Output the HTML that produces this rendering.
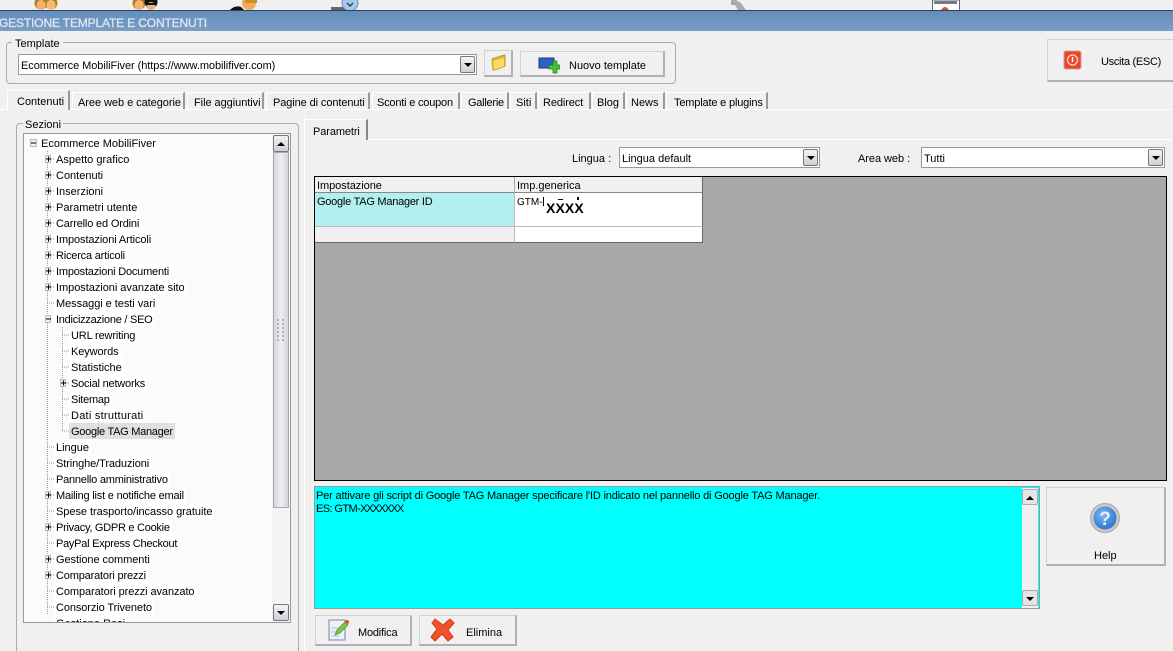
<!DOCTYPE html>
<html><head><meta charset="utf-8">
<style>
html,body{margin:0;padding:0;width:1173px;height:651px;overflow:hidden;background:#f0f0f0}
body{position:relative;font:11px/13px "Liberation Sans",sans-serif;color:#000}
.a{position:absolute;box-sizing:border-box}
.t{position:absolute;white-space:nowrap;line-height:13px}
.tab{position:absolute;top:92px;height:17px;border-top:1px solid #fff;border-right:2px solid #999;border-left:1px solid #fff;box-sizing:border-box}
.btn{position:absolute;box-sizing:border-box;background:#f0f0f0;border:1px solid #d0d0d0;border-right:2px solid #b0b0b0;border-bottom:2px solid #b0b0b0}
.combo{position:absolute;box-sizing:border-box;background:#fff;border:1px solid #999;height:21px}
.arr{position:absolute;box-sizing:border-box;width:15px;height:17px;background:linear-gradient(#f4f4f6,#cfd0d6);border:1px solid #777;border-radius:2px}
.arr:after{content:"";position:absolute;left:3px;top:6px;border-left:4px solid transparent;border-right:4px solid transparent;border-top:4px solid #000}
.up:after{border-top:0;border-bottom:4px solid #000}
.n{position:absolute;white-space:nowrap;height:16px;line-height:19px;background:#fff;padding:0 2px}
</style></head><body>

<!-- top icons -->
<svg class="a" style="left:0;top:0" width="1173" height="11">
<g><circle cx="41" cy="3" r="6.500" fill="#b07a20"/><circle cx="51" cy="3" r="6.500" fill="#b8841f"/><ellipse cx="41" cy="5" rx="4.500" ry="5" fill="#f6b070"/><ellipse cx="51" cy="5" rx="4.500" ry="5" fill="#f8b878"/></g>
<g><circle cx="139" cy="3" r="6.500" fill="#b07a20"/><ellipse cx="139" cy="5" rx="4.500" ry="5" fill="#f6b070"/><circle cx="151" cy="2" r="6.500" fill="#111"/><ellipse cx="151" cy="6" rx="4.500" ry="4" fill="#e8b080"/><path d="M146 3h11v2h-11z" fill="#111"/></g>
<g><path d="M230 10q5-5 11-3l3 3z" fill="#111"/><ellipse cx="249" cy="3" rx="7" ry="7" fill="#f4aa58"/><path d="M245 0h12v3h-12z" fill="#c8941f"/></g>
<g><path d="M331 7h14v3h-14z" fill="#667"/><circle cx="350" cy="3" r="8" fill="#a9c9ea" stroke="#6a8ab0"/><path d="M347 3l3 3 3-3" fill="none" stroke="#345" stroke-width="1.500"/></g>
<path d="M731 0h5l3 2 2 1 5 7h-8l-3-5h-4z" fill="#aaa"/>
<g><rect x="932.500" y="0" width="27" height="11" fill="#fff" stroke="#667"/><path d="M934 1h23v3h-23z" fill="#778"/><path d="M941 10q4-6 8 0z" fill="#e0502a"/></g>
</svg>

<!-- title bar -->
<div class="a" style="left:0;top:10px;width:1173px;height:1px;background:#2f4058"></div>
<div class="a" style="left:0;top:11px;width:1173px;height:20px;background:linear-gradient(#638ebb,#7b9dc4)"></div>
<div class="t" style="left:-1px;top:17px;font-size:12px;color:#dfe7f1;letter-spacing:-.15px;-webkit-text-stroke:.3px #dfe7f1">GESTIONE TEMPLATE E CONTENUTI</div>

<!-- template group -->
<div class="a" style="left:6px;top:42px;width:670px;height:42px;border:1px solid #aaa;border-radius:4px"></div>
<div class="t" style="left:12px;top:38px;background:#f0f0f0;padding:0 3px">Template</div>
<div class="combo" style="left:18px;top:54px;width:459px"><span class="t" style="left:2px;top:5px;letter-spacing:-.06px">Ecommerce MobiliFiver (https://www.mobilifiver.com)</span><div class="arr" style="left:441px;top:1px"></div></div>
<div class="btn" style="left:484px;top:50px;width:29px;height:27px">
<svg class="a" style="left:5px;top:3px" width="18" height="18"><path d="M2 5l9-3 4-1v11l-10 4H3z" fill="#e0b830" stroke="#b89a30"/><path d="M3 7l11-3v8l-10 4z" fill="#fbdc60"/></svg></div>
<div class="btn" style="left:520px;top:51px;width:145px;height:26px">
<svg class="a" style="left:17px;top:5px" width="22" height="18"><rect x="1" y="1" width="15" height="10" fill="#2a62c8" stroke="#1a3a80"/><path d="M11 8h4V4h4v4h3v4h-3v4h-4v-4h-4z" fill="#48c038" stroke="#1c8018" stroke-width=".7"/></svg>
<span class="t" style="left:48px;top:8px">Nuovo template</span></div>
<div class="btn" style="left:1047px;top:39px;width:130px;height:43px;border-right:0">
<svg class="a" style="left:15px;top:10px" width="20" height="20"><rect x="1" y="1" width="17" height="18" rx="2" fill="#e8452a" stroke="#d8a090"/><circle cx="9.500" cy="10" r="5" fill="none" stroke="#f8c8b8" stroke-width="1.500"/><path d="M9.500 7v5" stroke="#fff" stroke-width="1.500"/></svg>
<span class="t" style="left:53px;top:16px;letter-spacing:-.3px">Uscita (ESC)</span></div>

<!-- tabs -->
<div class="a" style="left:0;top:109px;width:1173px;height:1px;background:#fff"></div>
<div class="tab" style="left:7px;top:90px;width:63px;height:20px;background:#f0f0f0"><span class="t" style="left:9px;top:5px">Contenuti</span></div>
<div class="tab" style="left:72px;width:113px"><span class="t" style="left:5px;top:4px;letter-spacing:-.05px">Aree web e categorie</span></div>
<div class="tab" style="left:187px;width:77px"><span class="t" style="left:6px;top:4px;letter-spacing:-.05px">File aggiuntivi</span></div>
<div class="tab" style="left:266px;width:104px"><span class="t" style="left:6px;top:4px;letter-spacing:-.1px">Pagine di contenuti</span></div>
<div class="tab" style="left:372px;width:88px"><span class="t" style="left:4px;top:4px;letter-spacing:-.2px">Sconti e coupon</span></div>
<div class="tab" style="left:461px;width:48px"><span class="t" style="left:6px;top:4px;letter-spacing:-.25px">Gallerie</span></div>
<div class="tab" style="left:510px;width:27px"><span class="t" style="left:5px;top:4px">Siti</span></div>
<div class="tab" style="left:538px;width:53px"><span class="t" style="left:4px;top:4px;letter-spacing:-.1px">Redirect</span></div>
<div class="tab" style="left:592px;width:33px"><span class="t" style="left:4px;top:4px">Blog</span></div>
<div class="tab" style="left:626px;width:39px"><span class="t" style="left:4px;top:4px">News</span></div>
<div class="tab" style="left:666px;width:102px"><span class="t" style="left:7px;top:4px;letter-spacing:-.17px">Template e plugins</span></div>

<!-- Sezioni -->
<div class="a" style="left:16px;top:123px;width:283px;height:540px;border:1px solid #aaa;border-radius:4px"></div>
<div class="t" style="left:23px;top:119px;background:#f0f0f0;padding:0 2px">Sezioni</div>
<div class="a" style="left:23px;top:133px;width:268px;height:490px;border:1px solid #999;background:#fbfbfb;overflow:hidden">
<svg class="a" style="left:0;top:0" width="60" height="488">
<path d="M23.500 17V480M38.500 193V297" stroke="#999" stroke-dasharray="1 1" fill="none"/>
<path d="M23 25h8M23 41h8M23 57h8M23 73h8M23 89h8M23 105h8M23 121h8M23 137h8M23 153h8M23 169h8M23 313h8M23 329h8M23 345h8M23 361h8M23 377h8M23 393h8M23 409h8M23 425h8M23 441h8M23 457h8M23 473h8M38 201h8M38 217h8M38 233h8M38 249h8M38 265h8M38 281h8M38 297h8" stroke="#999" stroke-dasharray="1 1" fill="none"/>
<g fill="#f0f0f0" stroke="#bbb"><rect x="6.500" y="5.500" width="6" height="7"/><rect x="21.500" y="21.500" width="5" height="7"/><rect x="21.500" y="37.500" width="5" height="7"/><rect x="21.500" y="53.500" width="5" height="7"/><rect x="21.500" y="69.500" width="5" height="7"/><rect x="21.500" y="85.500" width="5" height="7"/><rect x="21.500" y="101.500" width="5" height="7"/><rect x="21.500" y="117.500" width="5" height="7"/><rect x="21.500" y="133.500" width="5" height="7"/><rect x="21.500" y="149.500" width="5" height="7"/><rect x="21.500" y="181.500" width="5" height="7"/><rect x="36.500" y="245.500" width="5" height="7"/><rect x="21.500" y="357.500" width="5" height="7"/><rect x="21.500" y="389.500" width="5" height="7"/><rect x="21.500" y="421.500" width="5" height="7"/><rect x="21.500" y="437.500" width="5" height="7"/></g>
<path d="M7 9h5M22 25h5M24.500 22.500v5M22 41h5M24.500 38.500v5M22 57h5M24.500 54.500v5M22 73h5M24.500 70.500v5M22 89h5M24.500 86.500v5M22 105h5M24.500 102.500v5M22 121h5M24.500 118.500v5M22 137h5M24.500 134.500v5M22 153h5M24.500 150.500v5M22 185h5M37 249h5M39.500 246.500v5M22 361h5M24.500 358.500v5M22 393h5M24.500 390.500v5M22 425h5M24.500 422.500v5M22 441h5M24.500 438.500v5" stroke="#000" fill="none"/>
</svg>
<div class="n" style="left:15px;top:1px">Ecommerce MobiliFiver</div>
<div class="n" style="left:30px;top:17px">Aspetto grafico</div>
<div class="n" style="left:30px;top:33px">Contenuti</div>
<div class="n" style="left:30px;top:49px">Inserzioni</div>
<div class="n" style="left:30px;top:65px">Parametri utente</div>
<div class="n" style="left:30px;top:81px;letter-spacing:-.17px">Carrello ed Ordini</div>
<div class="n" style="left:30px;top:97px;letter-spacing:-.1px">Impostazioni Articoli</div>
<div class="n" style="left:30px;top:113px;letter-spacing:-.2px">Ricerca articoli</div>
<div class="n" style="left:30px;top:129px;letter-spacing:-.2px">Impostazioni Documenti</div>
<div class="n" style="left:30px;top:145px;letter-spacing:-.04px">Impostazioni avanzate sito</div>
<div class="n" style="left:30px;top:161px;letter-spacing:-.05px">Messaggi e testi vari</div>
<div class="n" style="left:30px;top:177px;letter-spacing:-.25px">Indicizzazione / SEO</div>
<div class="n" style="left:45px;top:193px;letter-spacing:-.15px">URL rewriting</div>
<div class="n" style="left:45px;top:209px;letter-spacing:-.1px">Keywords</div>
<div class="n" style="left:45px;top:225px">Statistiche</div>
<div class="n" style="left:45px;top:241px;letter-spacing:-.2px">Social networks</div>
<div class="n" style="left:45px;top:257px;letter-spacing:-.25px">Sitemap</div>
<div class="n" style="left:45px;top:273px;letter-spacing:.25px">Dati strutturati</div>
<div class="n" style="left:45px;top:289px;background:#e0e0e0;letter-spacing:-.27px">Google TAG Manager</div>
<div class="n" style="left:30px;top:305px">Lingue</div>
<div class="n" style="left:30px;top:321px;letter-spacing:-.1px">Stringhe/Traduzioni</div>
<div class="n" style="left:30px;top:337px;letter-spacing:-.22px">Pannello amministrativo</div>
<div class="n" style="left:30px;top:353px;letter-spacing:-.2px">Mailing list e notifiche email</div>
<div class="n" style="left:30px;top:369px;letter-spacing:-.04px">Spese trasporto/incasso gratuite</div>
<div class="n" style="left:30px;top:385px;letter-spacing:-.27px">Privacy, GDPR e Cookie</div>
<div class="n" style="left:30px;top:401px;letter-spacing:-.26px">PayPal Express Checkout</div>
<div class="n" style="left:30px;top:417px;letter-spacing:-.06px">Gestione commenti</div>
<div class="n" style="left:30px;top:433px;letter-spacing:-.17px">Comparatori prezzi</div>
<div class="n" style="left:30px;top:449px;letter-spacing:-.08px">Comparatori prezzi avanzato</div>
<div class="n" style="left:30px;top:465px;letter-spacing:-.1px">Consorzio Triveneto</div>
<div class="n" style="left:30px;top:481px">Gestione Resi</div>
<!-- scrollbar -->
<div class="a" style="left:248px;top:0;width:18px;height:488px;background:#f4f4f4"></div>
<div class="arr up" style="left:249px;top:1px;width:16px;height:17px"></div>
<div class="a" style="left:249px;top:18px;width:16px;height:356px;background:linear-gradient(90deg,#d4d5dc,#eeeef2 50%,#d4d5dc);border:1px solid #aaa"></div>
<svg class="a" style="left:252px;top:185px" width="10" height="24"><path d="M1 0h2v2H1zM6 0h2v2H6zM1 4h2v2H1zM6 4h2v2H6zM1 8h2v2H1zM6 8h2v2H6zM1 12h2v2H1zM6 12h2v2H6zM1 16h2v2H1zM6 16h2v2H6zM1 20h2v2H1zM6 20h2v2H6z" fill="#b0b0b8"/></svg>
<div class="arr" style="left:249px;top:470px;width:16px;height:17px"></div>
</div>

<!-- right panel -->
<div class="a" style="left:304px;top:116px;width:1px;height:540px;background:#fff"></div>
<div class="a" style="left:304px;top:139px;width:869px;height:1px;background:#fff"></div>
<div class="a" style="left:305px;top:119px;width:63px;height:21px;background:#f0f0f0;border-top:1px solid #fff;border-right:2px solid #888"><span class="t" style="left:8px;top:6px;letter-spacing:-.1px">Parametri</span></div>

<div class="t" style="left:572px;top:153px">Lingua :</div>
<div class="combo" style="left:619px;top:147px;width:201px"><span class="t" style="left:2px;top:5px">Lingua default</span><div class="arr" style="left:183px;top:1px"></div></div>
<div class="t" style="left:858px;top:153px;letter-spacing:-.05px">Area web :</div>
<div class="combo" style="left:921px;top:147px;width:244px"><span class="t" style="left:2px;top:5px">Tutti</span><div class="arr" style="left:226px;top:1px"></div></div>

<!-- grid -->
<div class="a" style="left:314px;top:176px;width:853px;height:305px;background:#a9a9a9;border:1px solid #000"></div>
<div class="a" style="left:315px;top:177px;width:200px;height:16px;background:#f0f0f0;border-right:1px solid #aaa;border-bottom:1px solid #888"><span class="t" style="left:2px;top:2px;letter-spacing:-.05px;margin-top:1px">Impostazione</span></div>
<div class="a" style="left:515px;top:177px;width:188px;height:16px;background:#f0f0f0;border-right:1px solid #666;border-bottom:1px solid #888"><span class="t" style="left:2px;top:3px">Imp.generica</span></div>
<div class="a" style="left:315px;top:193px;width:200px;height:34px;background:#b2eff0;border-bottom:1px solid #bbb;border-right:1px solid #bbb"><span class="t" style="left:2px;top:3px;letter-spacing:-.25px">Google TAG Manager ID</span></div>
<div class="a" style="left:515px;top:193px;width:188px;height:34px;background:#fff;border-bottom:1px solid #bbb;border-right:1px solid #666"><span class="t" style="left:2px;top:3px;font-size:10px">GTM-</span><span class="t" style="left:28px;top:4px;font-size:1px;width:1px;height:9px;background:#000"></span><span class="t" style="left:31px;top:9px;font-size:14px;font-weight:bold;letter-spacing:.1px">XXXX</span><span class="a" style="left:43px;top:6px;width:5px;height:1px;background:#000"></span><span class="a" style="left:62px;top:4px;width:2px;height:3px;background:#000"></span></div>
<div class="a" style="left:315px;top:227px;width:200px;height:16px;background:#f0f0f0;border-bottom:1px solid #666;border-right:1px solid #bbb"></div>
<div class="a" style="left:515px;top:227px;width:188px;height:16px;background:#fff;border-bottom:1px solid #666;border-right:1px solid #666"></div>

<!-- help text -->
<div class="a" style="left:314px;top:486px;width:726px;height:123px;background:#00ffff;border:1px solid #999">
<span class="t" style="left:1px;top:3px;letter-spacing:-.17px">Per attivare gli script di Google TAG Manager specificare l'ID indicato nel pannello di Google TAG Manager.</span>
<span class="t" style="left:1px;top:16px;letter-spacing:-.6px">ES: GTM-<span style="letter-spacing:-1.2px">XXXXXXX</span></span>
<div class="a" style="left:707px;top:1px;width:16px;height:120px;background:#f0f0f0"></div>
<div class="arr up" style="left:707px;top:2px;width:16px;height:16px;background:#e4e4e6;border-color:#aaa"></div>
<div class="arr" style="left:707px;top:103px;width:16px;height:16px;background:#e4e4e6;border-color:#aaa"></div>
</div>
<div class="btn" style="left:1046px;top:487px;width:120px;height:79px">
<svg class="a" style="left:43px;top:15px" width="32" height="32"><defs><radialGradient id="g" cx=".4" cy=".35" r=".7"><stop offset="0" stop-color="#7ab8f0"/><stop offset="1" stop-color="#2a72cc"/></radialGradient></defs><circle cx="15" cy="15" r="14.500" fill="#c8c8cc" stroke="#aaa"/><circle cx="15" cy="15" r="11.500" fill="url(#g)"/><text x="15" y="22" font-family="Liberation Sans" font-weight="bold" font-size="19" text-anchor="middle" fill="#e8eefc">?</text></svg>
<span class="t" style="left:47px;top:62px">Help</span></div>

<!-- action buttons -->
<div class="btn" style="left:315px;top:615px;width:97px;height:31px">
<svg class="a" style="left:11px;top:2px" width="24" height="24"><rect x="2" y="2" width="16" height="20" fill="#eef2f8" stroke="#7088a8"/><path d="M4 10h12M4 14h8M4 18h8" stroke="#b0c0d0"/><path d="M8 17l2-5 8-8 3 3-8 8z" fill="#7cc84a" stroke="#488828" stroke-width=".7"/><circle cx="20" cy="4" r="2" fill="#e05030"/></svg>
<span class="t" style="left:42px;top:11px;letter-spacing:-.2px">Modifica</span></div>
<div class="btn" style="left:419px;top:615px;width:98px;height:31px">
<svg class="a" style="left:10px;top:2px" width="26" height="24"><path d="M5 1l8 6 7-6 4 4-6 7 5 7-5 4-6-7-7 7-4-4 6-8-5-6z" fill="#f0502a" stroke="#d83818" stroke-linejoin="round"/></svg>
<span class="t" style="left:46px;top:11px">Elimina</span></div>

</body></html>
